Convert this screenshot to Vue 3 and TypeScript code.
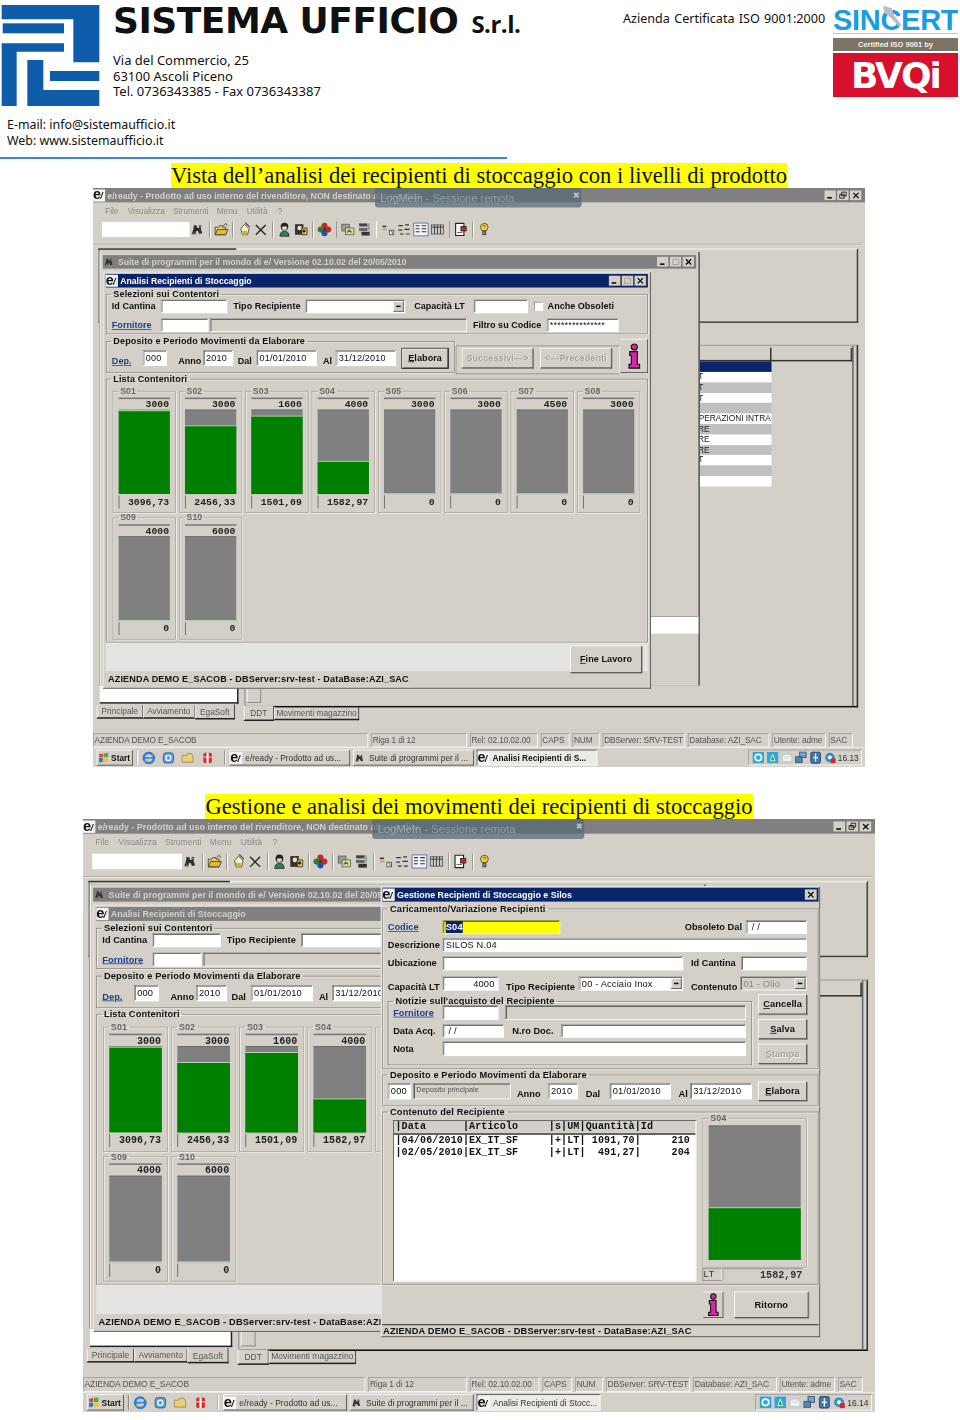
<template>
  <div class="page">
    <svg class="defs" width="0" height="0" aria-hidden="true">
      <symbol id="t-binoc" viewBox="0 0 22 22"><path d="M6 5l4 1v3h2l1-4 3 1-1 4 2 6-4 1-2-4h-2l-1 5-5-1 2-6z" fill="#333" /><path d="M13 7l3 1M5 16l3 1" stroke="#bbb" /></symbol>
      <symbol id="t-open" viewBox="0 0 22 22"><path d="M3 8h5l1-2h4v2h4v10H3z" fill="#f0d060" stroke="#333" /><path d="M3 18l3-7h14l-3 7z" fill="#e2b93a" stroke="#333" /><path d="M14 6l3-3 2 3" fill="none" stroke="#333" /></symbol>
      <symbol id="t-hand" viewBox="0 0 22 22"><path d="M11 4l6 6-2 8H8L6 10z" fill="#f7efc0" stroke="#333" /><path d="M12 2l6 6" stroke="#444" stroke-width="1.5" /><rect x="8" y="13" width="6" height="5" fill="#c9b040" /></symbol>
      <symbol id="t-x" viewBox="0 0 22 22"><path d="M4 5l13 13M17 5L4 18" stroke="#222" stroke-width="1.7" /></symbol>
      <symbol id="t-user1" viewBox="0 0 22 22"><circle cx="11" cy="7" r="5" fill="#222" /><path d="M8 7h6v3l-3 2-3-2z" fill="#e8e0d0" /><path d="M5 20c0-5 3-7 6-7s6 2 6 7z" fill="#2f7d4a" stroke="#222" /></symbol>
      <symbol id="t-user2" viewBox="0 0 22 22"><rect x="3" y="4" width="11" height="14" fill="#333" /><circle cx="9" cy="9" r="3" fill="#e8e0d0" /><path d="M12 9h7v9h-7z" fill="#e6c53c" stroke="#222" /><circle cx="15" cy="13" r="2" fill="#222" /></symbol>
      <symbol id="t-flower" viewBox="0 0 22 22"><circle cx="11" cy="6" r="4" fill="#c62828" /><circle cx="6" cy="11" r="4" fill="#2e7d32" /><circle cx="16" cy="11" r="4" fill="#c62828" /><circle cx="11" cy="16" r="4" fill="#1f4fa8" /><circle cx="11" cy="11" r="2" fill="#333" /></symbol>
      <symbol id="t-img1" viewBox="0 0 22 22"><rect x="3" y="4" width="10" height="9" fill="#999" stroke="#555" /><rect x="8" y="9" width="11" height="9" fill="#e2dc9a" stroke="#555" /><path d="M10 15l3-3 3 3" fill="none" stroke="#2e7d32" stroke-width="1.6" /></symbol>
      <symbol id="t-img2" viewBox="0 0 22 22"><rect x="4" y="3" width="11" height="4" fill="#444" /><rect x="4" y="9" width="11" height="4" fill="#666" /><rect x="7" y="14" width="11" height="5" fill="#333" /><path d="M15 3h3v9h-3z" fill="#999" /></symbol>
      <symbol id="t-small" viewBox="0 0 22 22"><rect x="4" y="6" width="5" height="2" fill="#333" /><path d="M4 11h6" stroke="#c9a020" stroke-width="2" /><rect x="13" y="12" width="6" height="6" fill="#fff" stroke="#333" /><path d="M15 14h2v3" stroke="#333" fill="none" /></symbol>
      <symbol id="t-list" viewBox="0 0 22 22"><path d="M3 6h6M12 5h5M3 12h5M11 11h7M5 17h5M13 17h5" stroke="#333" stroke-width="1.6" /></symbol>
      <symbol id="t-detail" viewBox="0 0 22 22"><rect x="1.5" y="2.5" width="19" height="17" fill="#f2f2f8" stroke="#3a5fa0" /><path d="M4 6h5M12 6h6M4 10h5M12 10h6M4 14h5M12 14h6" stroke="#333" stroke-width="1.4" /></symbol>
      <symbol id="t-col" viewBox="0 0 22 22"><rect x="3" y="5" width="16" height="12" fill="#ccc" stroke="#444" /><path d="M7 5v12M11 5v12M15 5v12M3 8h16" stroke="#444" stroke-width="1.3" /></symbol>
      <symbol id="t-doc" viewBox="0 0 22 22"><path d="M4 3h11v16H4z" fill="#fff" stroke="#222" stroke-width="1.5" /><rect x="11" y="7" width="7" height="6" fill="#c62828" stroke="#222" /><path d="M6 15h7" stroke="#333" /></symbol>
      <symbol id="t-help" viewBox="0 0 22 22"><circle cx="11" cy="8" r="5" fill="#f5d83a" stroke="#333" /><rect x="9" y="13" width="4" height="5" fill="#888" stroke="#333" /><path d="M9.500 7c0-2 3-2 3 0 0 1-1.500 1-1.500 2.500" stroke="#333" fill="none" /></symbol>
      <symbol id="w-min" viewBox="0 0 16 14"><rect width="16" height="14" fill="#d4d0c8" /><path d="M0 14h16V0" stroke="#404040" fill="none" /><rect x="4" y="9" width="6" height="2" fill="#000" /></symbol>
      <symbol id="w-max" viewBox="0 0 16 14"><rect width="16" height="14" fill="#d4d0c8" /><path d="M0 14h16V0" stroke="#404040" fill="none" /><path d="M4 3.500h8v7H4z" fill="none" stroke="#999" /></symbol>
      <symbol id="w-res" viewBox="0 0 16 14"><rect width="16" height="14" fill="#d4d0c8" /><path d="M0 14h16V0" stroke="#404040" fill="none" /><path d="M6 2.500h6v5H6zM3.500 5.500h6v5h-6z" fill="#d4d0c8" stroke="#000" /></symbol>
      <symbol id="w-close" viewBox="0 0 16 14"><rect width="16" height="14" fill="#d4d0c8" /><path d="M0 14h16V0" stroke="#404040" fill="none" /><path d="M4.500 3.500l7 7M11.500 3.500l-7 7" stroke="#000" stroke-width="1.6" /></symbol>
      <symbol id="info" viewBox="0 0 18 34"><circle cx="9" cy="5" r="4" fill="#d428a8" stroke="#111" stroke-width="1.500" /><path d="M3 11h10v17h3v5H2v-5h3V16H3z" fill="#d428a8" stroke="#111" stroke-width="1.500" /></symbol>
      <symbol id="q-win" viewBox="0 0 16 16"><path d="M2 3l5-1v5H2z" fill="#d9482b" /><path d="M8 2l6-1v6H8z" fill="#56a83b" /><path d="M2 8h5v5l-5 1z" fill="#2f6fd0" /><path d="M8 8h6v5l-6 1z" fill="#eec32e" /></symbol>
      <symbol id="q-ie" viewBox="0 0 16 16"><circle cx="8" cy="8" r="6" fill="none" stroke="#2f7fd8" stroke-width="3" /><path d="M3 8h11" stroke="#2f7fd8" stroke-width="2" /><path d="M1 13c4 0 9-5 13-11" stroke="#e8c040" fill="none" /></symbol>
      <symbol id="q-mail" viewBox="0 0 16 16"><rect x="2" y="2" width="12" height="12" rx="3" fill="#5a9ed8" stroke="#2a5f9e" /><circle cx="8" cy="8" r="3" fill="none" stroke="#fff" stroke-width="1.500" /></symbol>
      <symbol id="q-folder" viewBox="0 0 16 16"><path d="M1 5h5l1-2h5l2 3v7H1z" fill="#e9cf7a" stroke="#9c8a45" /></symbol>
      <symbol id="q-gift" viewBox="0 0 16 16"><rect x="3" y="2" width="10" height="12" rx="2" fill="#d82a2a" /><path d="M8 2v12" stroke="#fff" stroke-width="2.500" /><path d="M3 7h10" stroke="#fff" /></symbol>
      <symbol id="y-a" viewBox="0 0 16 16"><rect x="1" y="1" width="14" height="14" fill="#2fa6d8" /><circle cx="8" cy="8" r="4" fill="none" stroke="#fff" stroke-width="2" /></symbol>
      <symbol id="y-b" viewBox="0 0 16 16"><rect x="1" y="1" width="14" height="14" fill="#2fa6d8" /><path d="M5 12l3-8 3 8z" fill="#2e9e3c" stroke="#fff" /></symbol>
      <symbol id="y-c" viewBox="0 0 16 16"><rect x="2" y="4" width="12" height="9" fill="#eef3f6" stroke="#b8c4cc" /><path d="M2 4l6 5 6-5" fill="none" stroke="#b8c4cc" /></symbol>
      <symbol id="y-d" viewBox="0 0 16 16"><rect x="6" y="1" width="8" height="7" fill="#6fa8dc" stroke="#345" /><rect x="1" y="7" width="8" height="7" fill="#4f88c6" stroke="#345" /></symbol>
      <symbol id="y-e" viewBox="0 0 16 16"><rect x="2" y="1" width="12" height="14" rx="2" fill="#3f78b8" stroke="#234" /><path d="M8 3v10M5 8h6" stroke="#fff" stroke-width="1.500" /></symbol>
      <symbol id="y-f" viewBox="0 0 16 16"><circle cx="8" cy="8" r="6" fill="#2f90d0" /><circle cx="8" cy="8" r="2.500" fill="#fff" /><rect x="9" y="9" width="6" height="6" fill="#d22" /></symbol>
    </svg>

    <header class="head">
      <svg class="logo" viewBox="0 0 309 330" width="103" height="110">
        <g fill="#0f5cab">
          <path d="M5 15H298V187H220V58H5Z" />
          <rect x="8" y="70" width="184" height="30" />
          <path d="M5 130H192V155H50V318H5Z" />
          <path d="M82 180H130V270H298V318H82Z" />
          <rect x="150" y="213" width="148" height="30" />
        </g>
      </svg>
      <div class="company">
        <h1 class="name">SISTEMA UFFICIO <small>S.r.l.</small></h1>
        <p class="addr">Via del Commercio, 25<br />63100 Ascoli Piceno<br />Tel. 0736343385 - Fax 0736343387</p>
      </div>
      <p class="iso">Azienda Certificata ISO 9001:2000</p>
      <div class="cert">
        <div class="sincert">SINCERT<svg class="italy" viewBox="0 0 30 30"><path d="M6 2l10 3 2 7 9 12-3 2-11-12-6-4z" fill="#b9c0c4" /></svg></div>
        <div class="certby">Certified ISO 9001 by</div>
        <div class="bvqi">BVQi</div>
      </div>
      <p class="contact">E-mail: info@sistemaufficio.it<br />Web: www.sistemaufficio.it</p>
      <div class="rule"></div>
    </header>

    <template v-for="shot in shots" :key="shot.time">
      <h2 class="caption"><mark>{{ shot.caption }}</mark></h2>
      <div class="frame" :style="{ width: shot.w + 'px', height: shot.h + 'px' }">
        <div class="desk" :style="{ transform: `scale(${shot.w / 1024}, ${shot.h / 768})` }">
          <div class="apptitle">
            <span class="eico">e<i>/</i></span>
            <span class="apptext">e/ready - Prodotto ad uso interno del rivenditore, NON destinato alla vendita</span>
            <span class="wbtns">
              <svg><use href="#w-min" /></svg><svg><use href="#w-res" /></svg><svg><use href="#w-close" /></svg>
            </span>
          </div>
          <div class="logmein"><span>LogMeIn</span> - Sessione remota<b>✖</b></div>
          <nav class="menubar">
            <span v-for="m in menu" :key="m.t" class="menuitem" :style="{ width: m.w + 'px' }">{{ m.t }}</span>
          </nav>
          <div class="toolbar">
            <span class="tcombo"></span>
            <template v-for="(t, i) in tools" :key="i">
              <span v-if="t === 'sep'" class="tsep"></span>
              <svg v-else class="ticon"><use :href="'#t-' + t" /></svg>
            </template>
          </div>

          <div class="mdi">
            <div class="toppanel"></div>
            <div class="gridpanel">
              <div class="gridhead"><span></span><span></span></div>
              <div class="gridsel"></div>
              <div v-for="(r, i) in gridRows" :key="i" class="gridrow" :class="{ odd: i % 2 === 1 }">{{ r }}</div>
            </div>
            <div class="treebox"></div>
            <div class="scrollsq"></div>
            <div class="hline"></div>
            <div class="tabs left">
              <span v-for="t in leftTabs" :key="t.t" class="tab" :class="{ on: t.t === 'EgaSoft' }" :style="{ width: t.w + 'px' }">{{ t.t }}</span>
            </div>
            <div class="tabs right">
              <span v-for="t in rightTabs" :key="t.t" class="tab" :class="{ on: t.t === 'DDT' }" :style="{ width: t.w + 'px' }">{{ t.t }}</span>
            </div>

            <div class="suite">
              <div class="wtitle off">
                <svg class="suiteico"><use href="#t-binoc" /></svg>
                <span>Suite di programmi per il mondo di e/ Versione 02.10.02 del 20/05/2010</span>
                <span class="wbtns">
                  <svg><use href="#w-min" /></svg><svg><use href="#w-max" /></svg><svg><use href="#w-close" /></svg>
                </span>
              </div>
              <div class="strip"></div>
            </div>

            <section class="dialog analisi">
              <div class="wtitle" :class="{ off: shot.gestione }">
                <span class="eico">e<i>/</i></span>
                <span>Analisi Recipienti di Stoccaggio</span>
                <span class="wbtns">
                  <svg><use href="#w-min" /></svg><svg><use href="#w-max" /></svg><svg><use href="#w-close" /></svg>
                </span>
              </div>
              <fieldset class="grp sel">
                <legend>Selezioni sui Contentori</legend>
                <div v-for="(r, i) in selRows" :key="i" class="row" :class="'sr' + i">
                  <span v-for="c in r" :key="c.x" :class="['c', c.k]" :style="ctl(c)"><i>{{ c.t }}</i></span>
                </div>
              </fieldset>
              <div class="depline">
                <fieldset class="grp dep">
                  <legend>Deposito e Periodo Movimenti da Elaborare</legend>
                  <div class="row drow">
                    <span v-for="c in depRow" :key="c.x" :class="['c', c.k]" :style="ctl(c)"><i>{{ c.t }}</i></span>
                  </div>
                </fieldset>
                <div class="navbox">
                  <div class="row">
                    <span v-for="c in navRow" :key="c.x" :class="['c', c.k]" :style="ctl(c)"><i>{{ c.t }}</i></span>
                  </div>
                </div>
                <div class="infobtn"><svg><use href="#info" /></svg></div>
              </div>
              <fieldset class="grp lista">
                <legend>Lista Contenitori</legend>
                <div class="tanks">
                  <fieldset v-for="t in tanks" :key="t.name" class="tank">
                    <legend>{{ t.name }}</legend>
                    <div class="tcap">{{ t.cap }}</div>
                    <div class="tbar"><div class="tfill" :style="{ height: fillPct(t) + '%' }"></div></div>
                    <div class="tval">{{ t.label }}</div>
                  </fieldset>
                </div>
              </fieldset>
              <div class="band">
                <span class="c btn ul fine"><i>Fine Lavoro</i></span>
              </div>
              <div class="dbline">AZIENDA DEMO E_SACOB - DBServer:srv-test - DataBase:AZI_SAC</div>
            </section>

            <section v-if="shot.gestione" class="dialog gestione">
              <div class="wtitle">
                <span class="eico">e<i>/</i></span>
                <span>Gestione Recipienti di Stoccaggio e Silos</span>
                <span class="wbtns"><svg><use href="#w-close" /></svg></span>
              </div>
              <fieldset class="grp carico">
                <legend>Caricamento/Variazione Recipienti</legend>
                <div v-for="(r, i) in caricoRows" :key="i" class="row" :class="'cr' + i">
                  <span v-for="c in r" :key="c.x" :class="['c', c.k]" :style="ctl(c)"><i>{{ c.t }}</i></span>
                </div>
                <div class="acquisto">
                  <fieldset class="grp notizie">
                    <legend>Notizie sull'acquisto del Recipiente</legend>
                    <div v-for="(r, i) in notizieRows" :key="i" class="row" :class="'nr' + i">
                      <span v-for="c in r" :key="c.x" :class="['c', c.k]" :style="ctl(c)"><i>{{ c.t }}</i></span>
                    </div>
                  </fieldset>
                  <div class="sidebtns">
                    <span class="c btn ul"><i>Cancella</i></span>
                    <span class="c btn ul"><i>Salva</i></span>
                    <span class="c btn ul dis"><i>Stampa</i></span>
                  </div>
                </div>
              </fieldset>
              <fieldset class="grp dep2">
                <legend>Deposito e Periodo Movimenti da Elaborare</legend>
                <div class="row">
                  <span v-for="c in dep2Row" :key="c.x" :class="['c', c.k]" :style="ctl(c)"><i>{{ c.t }}</i></span>
                </div>
              </fieldset>
              <fieldset class="grp contenuto">
                <legend>Contenuto del Recipiente</legend>
                <div class="cbody">
                  <div class="movlist">
                    <div class="movhead">{{ movHead }}</div>
                    <div v-for="m in movRows" :key="m" class="movrow">{{ m }}</div>
                  </div>
                  <div class="cside">
                    <fieldset class="bigtank">
                      <legend>S04</legend>
                      <div class="tbar big"><div class="tfill" :style="{ height: fillPct(tanks[3]) + '%' }"></div></div>
                    </fieldset>
                    <div class="bigval"><span>LT</span><span>1582,97</span></div>
                  </div>
                </div>
              </fieldset>
              <div class="gfoot">
                <div class="infobtn small"><svg><use href="#info" /></svg></div>
                <span class="c btn ritorno"><i>Ritorno</i></span>
              </div>
              <div class="dbline inset">AZIENDA DEMO E_SACOB - DBServer:srv-test - DataBase:AZI_SAC</div>
            </section>
          </div>

          <div class="statusbar">
            <span v-for="s in status" :key="s.t" :style="{ width: s.w + 'px' }">{{ s.t }}</span>
          </div>
          <div class="taskbar">
            <span class="start"><svg><use href="#q-win" /></svg>Start</span>
            <span class="tksep"></span>
            <svg v-for="q in quick" :key="q" class="quick"><use :href="'#q-' + q" /></svg>
            <span class="tksep"></span>
            <span class="tkbtn"><span class="eico">e<i>/</i></span>e/ready - Prodotto ad us...</span>
            <span class="tkbtn"><svg class="tkico"><use href="#t-binoc" /></svg>Suite di programmi per il ...</span>
            <span class="tkbtn active" :class="{ strong: !shot.gestione }"><span class="eico">e<i>/</i></span>{{ shot.task }}</span>
            <span class="tray">
              <svg v-for="y in tray" :key="y"><use :href="'#y-' + y" /></svg>
              <em>{{ shot.time }}</em>
            </span>
          </div>
        </div>
      </div>
    </template>
  </div>
</template>

<script setup lang="ts">
interface Ctl {
  k: string
  x: number
  w: number
  t?: string
  h?: number
}

interface Tank {
  name: string
  cap: number
  level: number
  label: string
}

// x values are native 1024x768 coords, turned into flow margins here
const row = (origin: number, items: Ctl[]) => {
  let p = origin
  return items.map((c) => {
    const ml = c.x - p
    p = c.x + c.w
    return { ...c, ml }
  })
}

const ctl = (c: Ctl & { ml: number }) => ({
  marginLeft: c.ml + 'px',
  width: c.w + 'px',
  height: c.h ? c.h + 'px' : undefined
})

const shots = [
  {
    caption: 'Vista dell’analisi dei recipienti di stoccaggio con i livelli di prodotto',
    w: 772,
    h: 579,
    gestione: false,
    task: 'Analisi Recipienti di S...',
    time: '16.13'
  },
  {
    caption: 'Gestione e analisi dei movimenti dei recipienti di stoccaggio',
    w: 792,
    h: 593,
    gestione: true,
    task: 'Analisi Recipienti di Stocc...',
    time: '16.14'
  }
]

const menu = [
  { t: 'File', w: 30 },
  { t: 'Visualizza', w: 60 },
  { t: 'Strumenti', w: 58 },
  { t: 'Menu', w: 40 },
  { t: 'Utilità', w: 41 },
  { t: '?', w: 14 }
]

const tools = [
  'binoc', 'sep', 'open', 'sep', 'hand', 'x', 'sep', 'user1', 'user2', 'sep', 'flower', 'sep',
  'img1', 'img2', 'sep', 'small', 'list', 'detail', 'col', 'sep', 'doc', 'sep', 'help'
]

const gridRows = ['CT', 'CT', 'CT', '', 'OPERAZIONI INTRA', 'ARE', 'ARE', 'ARE', 'CT', '', '']
const leftTabs = [
  { t: 'Principale', w: 61 },
  { t: 'Avviamento', w: 69 },
  { t: 'EgaSoft', w: 53 }
]
const rightTabs = [
  { t: 'DDT', w: 40 },
  { t: 'Movimenti magazzino', w: 113 }
]

const selRows = [
  row(18, [
    { k: 'lbl', x: 25, w: 63, t: 'Id Cantina' },
    { k: 'inp', x: 90, w: 88 },
    { k: 'lbl', x: 186, w: 94, t: 'Tipo Recipiente' },
    { k: 'cmb', x: 282, w: 132 },
    { k: 'lbl', x: 426, w: 75, t: 'Capacità LT' },
    { k: 'inp', x: 505, w: 72 },
    { k: 'chk', x: 585, w: 12, h: 12 },
    { k: 'lbl', x: 603, w: 90, t: 'Anche Obsoleti' }
  ]),
  row(18, [
    { k: 'lnk', x: 25, w: 60, t: 'Fornitore' },
    { k: 'inp', x: 90, w: 63 },
    { k: 'gry', x: 155, w: 341 },
    { k: 'lbl', x: 504, w: 92, t: 'Filtro su Codice' },
    { k: 'inp', x: 602, w: 95, t: '***************' }
  ])
]

const depRow = row(18, [
  { k: 'lnk low', x: 25, w: 36, t: 'Dep.' },
  { k: 'inp', x: 66, w: 32, t: '000' },
  { k: 'lbl low', x: 113, w: 32, t: 'Anno' },
  { k: 'inp', x: 146, w: 40, t: '2010' },
  { k: 'lbl low', x: 192, w: 24, t: 'Dal' },
  { k: 'inp', x: 217, w: 80, t: '01/01/2010' },
  { k: 'lbl low', x: 305, w: 16, t: 'Al' },
  { k: 'inp', x: 322, w: 80, t: '31/12/2010' },
  { k: 'btn ul focus', x: 410, w: 61, h: 26, t: 'Elabora' }
])

const navRow = row(482, [
  { k: 'btn dis', x: 489, w: 95, h: 27, t: 'Successivi--->' },
  { k: 'btn dis', x: 593, w: 95, h: 27, t: '<---Precedenti' }
])

const caricoRows = [
  row(388, [
    { k: 'lnk', x: 394, w: 60, t: 'Codice' },
    { k: 'inp yel', x: 465, w: 152, t: 'S04' },
    { k: 'lbl', x: 778, w: 78, t: 'Obsoleto Dal' },
    { k: 'inp', x: 857, w: 79, t: ' / /' }
  ]),
  row(388, [
    { k: 'lbl', x: 394, w: 68, t: 'Descrizione' },
    { k: 'inp', x: 465, w: 471, t: 'SILOS N.04' }
  ]),
  row(388, [
    { k: 'lbl', x: 394, w: 68, t: 'Ubicazione' },
    { k: 'inp', x: 465, w: 311 },
    { k: 'lbl', x: 786, w: 62, t: 'Id Cantina' },
    { k: 'inp', x: 851, w: 85 }
  ]),
  row(388, [
    { k: 'lbl low', x: 394, w: 68, t: 'Capacità LT' },
    { k: 'inp num', x: 465, w: 72, t: '4000' },
    { k: 'lbl low', x: 547, w: 92, t: 'Tipo Recipiente' },
    { k: 'cmb', x: 641, w: 135, t: '00 - Acciaio Inox' },
    { k: 'lbl low', x: 786, w: 60, t: 'Contenuto' },
    { k: 'cmb off', x: 850, w: 86, t: '01 - Olio' }
  ])
]

const notizieRows = [
  row(395, [
    { k: 'lnk', x: 401, w: 60, t: 'Fornitore' },
    { k: 'inp', x: 465, w: 72 },
    { k: 'gry', x: 546, w: 311 }
  ]),
  row(395, [
    { k: 'lbl', x: 401, w: 60, t: 'Data Acq.' },
    { k: 'inp', x: 465, w: 79, t: ' / /' },
    { k: 'lbl', x: 555, w: 60, t: 'N.ro Doc.' },
    { k: 'inp', x: 618, w: 239 }
  ]),
  row(395, [
    { k: 'lbl', x: 401, w: 30, t: 'Nota' },
    { k: 'inp', x: 465, w: 392 }
  ])
]

const dep2Row = row(388, [
  { k: 'inp', x: 394, w: 30, t: '000' },
  { k: 'gry tiny', x: 427, w: 126, t: 'Deposito principale' },
  { k: 'lbl low', x: 561, w: 36, t: 'Anno' },
  { k: 'inp', x: 601, w: 39, t: '2010' },
  { k: 'lbl low', x: 650, w: 28, t: 'Dal' },
  { k: 'inp', x: 681, w: 79, t: '01/01/2010' },
  { k: 'lbl low', x: 770, w: 14, t: 'Al' },
  { k: 'inp', x: 785, w: 80, t: '31/12/2010' },
  { k: 'btn ul', x: 873, w: 63, h: 25, t: 'Elabora' }
])

const tanks: Tank[] = [
  { name: 'S01', cap: 3000, level: 3096.73, label: '3096,73' },
  { name: 'S02', cap: 3000, level: 2456.33, label: '2456,33' },
  { name: 'S03', cap: 1600, level: 1501.09, label: '1501,09' },
  { name: 'S04', cap: 4000, level: 1582.97, label: '1582,97' },
  { name: 'S05', cap: 3000, level: 0, label: '0' },
  { name: 'S06', cap: 3000, level: 0, label: '0' },
  { name: 'S07', cap: 4500, level: 0, label: '0' },
  { name: 'S08', cap: 3000, level: 0, label: '0' },
  { name: 'S09', cap: 4000, level: 0, label: '0' },
  { name: 'S10', cap: 6000, level: 0, label: '0' }
]

const fillPct = (t: Tank) => Math.min(100, (t.level / t.cap) * 100)

const movHead = '|Data      |Articolo     |s|UM|Quantità|Id'
const movRows = [
  '|04/06/2010|EX_IT_SF     |+|LT| 1091,70|     210',
  '|02/05/2010|EX_IT_SF     |+|LT|  491,27|     204'
]

const status = [
  { t: 'AZIENDA DEMO E_SACOB', w: 365 },
  { t: 'Riga 1 di 12', w: 127 },
  { t: 'Rel: 02.10.02.00', w: 90 },
  { t: 'CAPS', w: 38 },
  { t: 'NUM', w: 36 },
  { t: 'DBServer: SRV-TEST', w: 109 },
  { t: 'Database: AZI_SAC', w: 108 },
  { t: 'Utente: adme', w: 71 },
  { t: 'SAC', w: 32 }
]

const quick = ['ie', 'mail', 'folder', 'gift']
const tray = ['a', 'b', 'c', 'd', 'e', 'f']
</script>

<style>
html,
body {
  margin: 0;
  background: #fff;
}
</style>

<style scoped>
.page {
  width: 958px;
  display: flex;
  flex-direction: column;
  align-items: center;
  padding-bottom: 8px;
  font-family: "Liberation Sans", Arial, sans-serif;
  color: #111;
}

.defs {
  position: absolute;
}

/* letterhead */
.head {
  width: 958px;
  height: 163px;
  display: grid;
  grid-template-columns: 113px 510px 210px 125px;
  grid-template-rows: 110px 40px auto;
  overflow: hidden;
}

.logo {
  display: block;
}

.company {
  min-width: 0;
}

.name {
  margin: 1px 0 0;
  font: 700 36px/40px "DejaVu Sans", sans-serif;
  color: #111;
  white-space: nowrap;
  letter-spacing: -0.5px;
}

.name small {
  font: 700 24px/40px "Open Sans", sans-serif;
  margin-left: 1px;
}

.addr {
  margin: 9px 0 0;
  font: 400 13px/15.6px "Noto Sans", sans-serif;
  white-space: nowrap;
}

.iso {
  margin: 11px 0 0;
  font: 400 12.6px/16px "Noto Sans", sans-serif;
  white-space: nowrap;
  word-spacing: 1px;
}

.cert {
  margin-top: 7px;
  width: 125px;
}

.sincert {
  position: relative;
  height: 26px;
  border-bottom: 1px solid #a7cfe6;
  font: 700 29px/26px "Liberation Sans", sans-serif;
  color: #1a9ce2;
  letter-spacing: -0.3px;
  white-space: nowrap;
}

.italy {
  position: absolute;
  left: 45px;
  top: -4px;
  width: 26px;
  height: 28px;
}

.certby {
  margin-top: 4px;
  height: 13px;
  background: #7c7464;
  color: #f4f2ea;
  font: 700 7.5px/13px "Liberation Sans", sans-serif;
  text-align: center;
}

.bvqi {
  margin-top: 2px;
  height: 44px;
  background: #d8102c;
  color: #fff;
  font: 700 36px/46px "DejaVu Sans", sans-serif;
  text-align: center;
  letter-spacing: -2px;
}

.contact {
  grid-column: 1 / -1;
  margin: 7px 0 0 7px;
  font: 400 12.4px/15.5px "Noto Sans", sans-serif;
}

.rule {
  grid-column: 1 / -1;
  width: 507px;
  height: 2px;
  margin-top: 7px;
  background: #3a86c8;
}

.caption {
  margin: 0;
  height: 25px;
  font: 400 22.6px/25px "Liberation Serif", serif;
  color: #111;
  white-space: nowrap;
}

.caption mark {
  background: #ffff00;
  color: inherit;
}

.frame + .caption {
  margin-top: 27px;
}

.frame {
  overflow: hidden;
  flex: none;
}

/* screenshot, drawn at its native size and scaled down */
.desk {
  position: relative;
  width: 1024px;
  height: 768px;
  transform-origin: 0 0;
  filter: blur(0.35px);
  background: #d4d0c8;
  display: flex;
  flex-direction: column;
  font: 400 12px/14px "Liberation Sans", sans-serif;
  color: #111;
}

.apptitle {
  height: 19px;
  flex: none;
  background: #808080;
  color: #d4d0c8;
  display: flex;
  align-items: center;
  font-weight: 700;
  font-size: 11.5px;
  padding-right: 4px;
}

.apptext {
  margin-left: 3px;
  white-space: nowrap;
}

.eico {
  display: inline-block;
  flex: none;
  width: 16px;
  height: 16px;
  background: #f4f4f4;
  color: #111;
  font: 700 19px/14px "Liberation Sans", sans-serif;
  overflow: hidden;
  text-align: left;
}

.eico i {
  font-size: 12px;
  margin-left: -1px;
}

.wbtns {
  margin-left: auto;
  display: flex;
  gap: 0;
}

.wbtns svg {
  width: 16px;
  height: 14px;
  display: block;
  margin-left: 1px;
}

.logmein {
  position: absolute;
  left: 374px;
  top: 0;
  width: 274px;
  height: 26px;
  box-sizing: border-box;
  padding: 6px 6px 0 7px;
  background: rgba(84, 104, 118, 0.72);
  border-radius: 0 0 4px 4px;
  color: #8d9ea9;
  font-size: 14.5px;
  white-space: nowrap;
}

.logmein span {
  color: #a0abb2;
}

.logmein b {
  position: absolute;
  right: 3px;
  top: 3px;
  font-size: 10px;
  color: #b4bdc3;
}

.menubar {
  height: 22px;
  flex: none;
  display: flex;
  align-items: center;
  padding-left: 16px;
  color: #8a8a86;
  font-size: 11px;
  box-sizing: border-box;
}

.menuitem {
  white-space: nowrap;
}

.toolbar {
  height: 28px;
  flex: none;
  display: flex;
  align-items: center;
  padding-left: 12px;
}

.tcombo {
  width: 116px;
  height: 20px;
  background: #fff;
  position: relative;
  box-sizing: border-box;
  margin-right: 0;
}

.tcombo::after {
  content: "";
  position: absolute;
  right: -12px;
  top: 8px;
  border: 3px solid transparent;
  border-top-color: #222;
}

.ticon {
  width: 22px;
  height: 22px;
  flex: none;
}

.tsep {
  width: 9px;
  flex: none;
  height: 22px;
  background: linear-gradient(90deg, transparent 4px, #9a978f 4px, #9a978f 5px, #fff 5px, #fff 6px, transparent 6px);
}

/* desktop area: the windows sit on it as on a free canvas */
.mdi {
  position: relative;
  flex: 1;
  min-height: 0;
  overflow: hidden;
}

.mdi::before {
  content: "";
  position: absolute;
  left: 0;
  top: 5px;
  right: 3px;
  height: 1px;
  background: #a8a59d;
  box-shadow: 0 1px 0 #f4f2ee;
}

.toppanel {
  position: absolute;
  left: 7px;
  top: 11px;
  width: 1008px;
  height: 99px;
  box-sizing: border-box;
  border: 2px solid;
  border-color: #ecebe6 #444 #444 #888;
}

.toppanel::before {
  content: "";
  position: absolute;
  left: -2px;
  top: -2px;
  width: 183px;
  height: 2px;
  background: #333;
}

.gridpanel {
  position: absolute;
  left: 700px;
  top: 139px;
  width: 315px;
  height: 479px;
  box-sizing: border-box;
  border-right: 2px solid #333;
  border-top: 1px solid #8a8a8a;
  box-shadow: inset -4px 0 0 #d4d0c8, inset -6px 0 0 #666;
  padding-top: 3px;
}

.gridhead {
  display: flex;
  height: 18px;
}

.gridhead span {
  width: 200px;
  border-right: 2px solid #333;
  border-bottom: 2px solid #333;
  box-sizing: border-box;
}

.gridhead span + span {
  width: 107px;
}

.gridsel {
  width: 200px;
  height: 14px;
  background: #0a246a;
}

.gridrow {
  width: 200px;
  height: 13.8px;
  line-height: 13.8px;
  background: #fff;
  font-size: 11px;
  white-space: nowrap;
  padding-left: 95px;
  box-sizing: border-box;
  color: #222;
}

.gridrow.odd {
  background: #c0c0c0;
}

.treebox {
  position: absolute;
  left: 9px;
  top: 590px;
  width: 184px;
  height: 25px;
  box-sizing: border-box;
  background: #fff;
  border-right: 2px solid #222;
  border-bottom: 2px solid #222;
}

.scrollsq {
  position: absolute;
  left: 204px;
  top: 594px;
  width: 19px;
  height: 20px;
  box-sizing: border-box;
  border: 1px solid #8a8a8a;
  border-color: #fff #777 #777 #fff;
}

.hline {
  position: absolute;
  left: 201px;
  top: 618px;
  width: 814px;
  height: 2px;
  background: #111;
}

.hline::before {
  content: "";
  position: absolute;
  left: 0;
  top: -26px;
  width: 1px;
  height: 26px;
  background: #777;
}

.tabs {
  position: absolute;
  display: flex;
  font-size: 11px;
  color: #555;
}

.tabs.left {
  left: 5px;
  top: 617px;
}

.tabs.right {
  left: 200px;
  top: 619px;
}

.tab {
  height: 18px;
  line-height: 17px;
  box-sizing: border-box;
  text-align: center;
  border-right: 1px solid #222;
  border-bottom: 2px solid #222;
  border-left: 1px solid #fff;
  white-space: nowrap;
}

.tab.on {
  height: 20px;
  line-height: 20px;
  background: #d4d0c8;
  margin-top: -1px;
}

.suite {
  position: absolute;
  left: 9px;
  top: 16px;
  width: 796px;
  height: 575px;
  box-sizing: border-box;
  background: #d4d0c8;
  border-right: 2px solid #555;
  border-left: 1px solid #fff;
  box-shadow: -1px 0 0 #888;
  padding: 4px 3px 0;
}

.wtitle {
  height: 18px;
  flex: none;
  background: #0a246a;
  color: #fff;
  display: flex;
  align-items: center;
  gap: 3px;
  font-weight: 700;
  font-size: 11.5px;
  padding-right: 2px;
  white-space: nowrap;
  overflow: hidden;
}

.wtitle.off {
  background: #808080;
  color: #d4d0c8;
}

.suiteico {
  width: 17px;
  height: 16px;
  flex: none;
}

.strip {
  position: absolute;
  right: 0;
  top: 483px;
  width: 64px;
  height: 23px;
  background: #fff;
  border-top: 1px solid #888;
  box-sizing: border-box;
}

.dialog {
  position: absolute;
  background: #d4d0c8;
  box-sizing: border-box;
  display: flex;
  flex-direction: column;
  border: 1px solid;
  border-color: #f0efec #404040 #404040 #f0efec;
  padding: 2px 3px;
  font-size: 12px;
}

.analisi {
  left: 13px;
  top: 42px;
  width: 727px;
  height: 553px;
}

.gestione {
  left: 385px;
  top: 18px;
  width: 568px;
  height: 584px;
  padding: 1px;
}

.grp,
.tank,
.bigtank {
  margin: 0;
  padding: 0;
  min-width: 0;
  box-sizing: border-box;
  border: 1px solid #8a8880;
  box-shadow: inset 1px 1px 0 #f4f2ee, 1px 1px 0 #f4f2ee;
}

.tank,
.bigtank {
  border-color: #a8a69e;
}

.grp legend {
  margin-left: 6px;
  padding: 0 3px;
  font-weight: 700;
  line-height: 14px;
  height: 14px;
  white-space: nowrap;
  letter-spacing: 0.15px;
}

.sel {
  height: 60px;
  margin-top: 2px;
}

.row {
  display: flex;
  align-items: center;
  height: 18px;
}

.sr1 {
  margin-top: 7px;
}

.c {
  display: block;
  flex: none;
  box-sizing: border-box;
  white-space: pre;
}

.c i {
  font-style: normal;
}

.lbl,
.lnk {
  font-weight: 700;
}

.lnk {
  color: #1c3f8f;
  text-decoration: underline;
}

.low {
  align-self: flex-end;
  margin-bottom: -1px;
}

.inp,
.cmb,
.gry {
  height: 18px;
  line-height: 16px;
  padding-left: 3px;
  overflow: hidden;
  background: #fff;
  border: 1px solid;
  border-color: #808080 #fff #fff #808080;
  box-shadow: inset 1px 1px 0 #404040;
  font-size: 12px;
  letter-spacing: 0.2px;
}

.gry {
  background: #d4d0c8;
}

.tiny {
  font-size: 9.5px;
  color: #555;
  letter-spacing: 0;
  line-height: 13px;
  height: 21px;
}

.num {
  text-align: right;
  padding-right: 4px;
}

.yel {
  background: #ffff00;
  font-weight: 700;
}

.yel i {
  background: #0a246a;
  color: #fff;
  display: inline-block;
}

.cmb {
  position: relative;
  font-weight: 400;
}

.cmb::after {
  content: "";
  position: absolute;
  right: 1px;
  top: 1px;
  bottom: 1px;
  width: 14px;
  box-sizing: border-box;
  background: #d4d0c8 linear-gradient(#111, #111) center / 6px 2px no-repeat;
  border: 1px solid;
  border-color: #fff #404040 #404040 #fff;
}

.cmb.off {
  background: #d4d0c8;
  color: #8a8a86;
}

.chk {
  background: #fff;
  border: 1px solid;
  border-color: #808080 #fff #fff #808080;
}

.btn {
  background: #d4d0c8;
  border: 1px solid;
  border-color: #fff #404040 #404040 #fff;
  box-shadow: 1px 1px 0 #808080;
  font-weight: 700;
  text-align: center;
  line-height: 23px;
  letter-spacing: 0.1px;
}

.btn.ul::first-letter {
  text-decoration: underline;
}

.btn.focus {
  outline: 1px solid #222;
}

.dis,
.btn.dis {
  color: #a09e98;
  text-shadow: 1px 1px 0 #f6f6f4;
  font-weight: 700;
}

.depline {
  display: flex;
  margin-top: 2px;
  height: 50px;
  flex: none;
}

.dep {
  width: 463px;
  height: 49px;
  flex: none;
}

.drow {
  margin-top: 5px;
  height: 21px;
}

.drow .inp {
  height: 21px;
  line-height: 18px;
}

.navbox {
  width: 218px;
  height: 38px;
  margin: 13px 0 0 1px;
  flex: none;
  box-sizing: border-box;
  border: 1px solid;
  border-color: #8a8880 #f4f2ee #8a8880 #8a8880;
  padding-top: 6px;
}

.navbox .btn {
  line-height: 25px;
}

.infobtn {
  width: 37px;
  height: 45px;
  margin-top: 4px;
  flex: none;
  box-sizing: border-box;
  display: flex;
  align-items: center;
  justify-content: center;
  border: 1px solid;
  border-color: #fff #404040 #404040 #d4d0c8;
}

.infobtn svg {
  width: 18px;
  height: 34px;
}

.infobtn.small {
  width: 26px;
  height: 34px;
  margin: 0;
}

.infobtn.small svg {
  width: 16px;
  height: 30px;
}

.lista {
  height: 357px;
  flex: none;
}

.tanks {
  display: grid;
  grid-template-columns: repeat(8, 84px);
  grid-auto-rows: 168px;
  column-gap: 4px;
  margin: 2px 0 0 8px;
}

.tank {
  height: 169px;
  padding: 2px 7px 0;
  color: #666;
}

.tank legend,
.bigtank legend {
  margin-left: 0;
  padding: 0 2px;
  line-height: 14px;
  height: 14px;
  font-size: 11.5px;
  color: #666;
}

.tcap,
.tval {
  height: 16px;
  box-sizing: border-box;
  font: 700 13px/15px "Liberation Mono", monospace;
  color: #222;
  text-align: right;
  padding-right: 1px;
}

.tcap {
  border-top: 2px solid #777;
}

.tval {
  height: 17px;
  border-left: 1px solid #555;
  margin-top: 1px;
  line-height: 17px;
}

.tbar {
  height: 113px;
  background: #808080;
  border-top: 1px solid #666;
  border-bottom: 1px solid #e8e8e4;
  display: flex;
  flex-direction: column;
  justify-content: flex-end;
  box-sizing: border-box;
}

.tfill {
  background: #008000;
  border-top: 1px solid #e8ecdf;
  box-sizing: border-box;
}

.band {
  flex: 1;
  min-height: 0;
  display: flex;
  justify-content: flex-end;
  align-items: flex-start;
  padding: 4px 8px 0 0;
  background: #e4e4e2;
}

.fine {
  width: 95px;
  height: 36px;
  line-height: 34px;
}

.dbline {
  height: 20px;
  flex: none;
  padding-left: 3px;
  line-height: 20px;
  font-weight: 700;
  white-space: nowrap;
  letter-spacing: 0.2px;
}

.carico {
  height: 215px;
  margin-top: 2px;
  flex: none;
}

.cr0 {
  margin-top: 8px;
}

.cr1 {
  margin-top: 5px;
}

.cr2 {
  margin-top: 6px;
}

.cr3 {
  margin-top: 8px;
}

.cr3 .low {
  margin-bottom: -2px;
}

.acquisto {
  display: flex;
  margin: 7px 0 0 6px;
}

.notizie {
  width: 471px;
  height: 90px;
  flex: none;
}

.nr0 {
  margin-top: -2px;
  height: 19px;
}

.nr0 .inp,
.nr0 .gry {
  height: 19px;
}

.nr1 {
  margin-top: 6px;
  height: 17px;
}

.nr1 .inp {
  height: 17px;
}

.nr2 {
  margin-top: 5px;
  height: 19px;
}

.nr2 .inp {
  height: 19px;
}

.sidebtns {
  display: flex;
  flex-direction: column;
  gap: 6px;
  margin: -2px 0 0 8px;
}

.sidebtns .btn {
  width: 63px;
  height: 26px;
  line-height: 24px;
}

.dep2 {
  height: 48px;
  flex: none;
}

.dep2 .row {
  margin-top: 2px;
  height: 25px;
}

.dep2 .low {
  margin-bottom: 2px;
}

.dep2 .inp {
  height: 21px;
  line-height: 18px;
}

.contenuto {
  height: 231px;
  margin-top: 0;
  flex: none;
}

.cbody {
  display: flex;
  margin-left: 13px;
}

.movlist {
  width: 392px;
  height: 209px;
  margin-top: 4px;
  flex: none;
  background: #fff;
  box-sizing: border-box;
  border: 1px solid;
  border-color: #404040 #f4f2ee #f4f2ee #404040;
  font: 700 13px/15px "Liberation Mono", monospace;
  white-space: pre;
  letter-spacing: 0.13px;
  overflow: hidden;
}

.movhead {
  height: 16px;
  line-height: 15px;
  padding-left: 2px;
  background: #d4d0c8;
  border-bottom: 2px solid #444;
  margin-bottom: -1px;
}

.movrow {
  padding-left: 2px;
  height: 16px;
}

.cside {
  width: 135px;
  margin: -6px 0 0 8px;
  flex: none;
}

.bigtank {
  height: 201px;
  padding: 3px 7px 0;
}

.tbar.big {
  height: 175px;
}

.bigval {
  display: flex;
  height: 16px;
  margin-top: 1px;
  font: 700 13px/17px "Liberation Mono", monospace;
  color: #333;
}

.bigval span:first-child {
  width: 25px;
  border: 1px solid #808080;
  border-right-color: #f4f2ee;
  box-sizing: border-box;
  font: 400 12px/14px "Liberation Mono", monospace;
  margin-right: 1px;
}

.bigval span:last-child {
  width: 104px;
  border-top: 1px solid #808080;
  border-left: 1px solid #999;
  box-sizing: border-box;
  text-align: right;
  padding-right: 1px;
}

.gfoot {
  display: flex;
  align-items: flex-start;
  height: 51px;
  flex: none;
  padding: 9px 0 0 415px;
  box-sizing: border-box;
}

.ritorno {
  width: 96px;
  height: 34px;
  line-height: 32px;
  margin-left: 14px;
}

.dbline.inset {
  height: 17px;
  line-height: 16px;
  border-top: 1px solid #222;
  box-shadow: inset 0 1px 0 #888;
  padding-left: 1px;
}

/* bottom bars */
.statusbar {
  height: 19px;
  flex: none;
  display: flex;
  gap: 4px;
  font-size: 11px;
  letter-spacing: -0.15px;
  color: #555;
  line-height: 16px;
}

.statusbar span {
  box-sizing: border-box;
  border: 1px solid;
  border-color: #999 #fff #fff #999;
  padding-left: 1px;
  white-space: nowrap;
  overflow: hidden;
}

.taskbar {
  height: 26px;
  flex: none;
  display: flex;
  align-items: center;
  border-top: 1px solid #f4f2ee;
  box-sizing: border-box;
  padding-left: 5px;
  font-size: 11px;
}

.start {
  width: 48px;
  height: 21px;
  box-sizing: border-box;
  display: flex;
  align-items: center;
  gap: 2px;
  font-weight: 700;
  border: 1px solid;
  border-color: #fff #404040 #404040 #fff;
}

.start svg {
  width: 16px;
  height: 16px;
  flex: none;
}

.tksep {
  width: 2px;
  height: 19px;
  flex: none;
  margin: 0 5px;
  background: linear-gradient(90deg, #8a8880 1px, #fff 1px);
}

.quick {
  width: 18px;
  height: 18px;
  flex: none;
  margin-right: 8px;
}

.tkbtn {
  width: 160px;
  height: 21px;
  flex: none;
  box-sizing: border-box;
  display: flex;
  align-items: center;
  gap: 4px;
  margin-right: 4px;
  border: 1px solid;
  border-color: #fff #404040 #404040 #fff;
  white-space: nowrap;
  overflow: hidden;
  color: #333;
}

.tkico {
  width: 16px;
  height: 16px;
  flex: none;
}

.tkbtn.active {
  background: #eceae4;
  border-color: #404040 #fff #fff #404040;
}

.tkbtn.strong {
  font-weight: 700;
  color: #111;
}

.tray {
  margin-left: auto;
  margin-right: 4px;
  width: 151px;
  height: 21px;
  box-sizing: border-box;
  display: flex;
  align-items: center;
  gap: 2px;
  padding-left: 4px;
  border: 1px solid;
  border-color: #999 #fff #fff #999;
}

.tray svg {
  width: 17px;
  height: 17px;
  flex: none;
}

.tray em {
  margin-left: auto;
  margin-right: 6px;
  font-style: normal;
  color: #333;
}
</style>
